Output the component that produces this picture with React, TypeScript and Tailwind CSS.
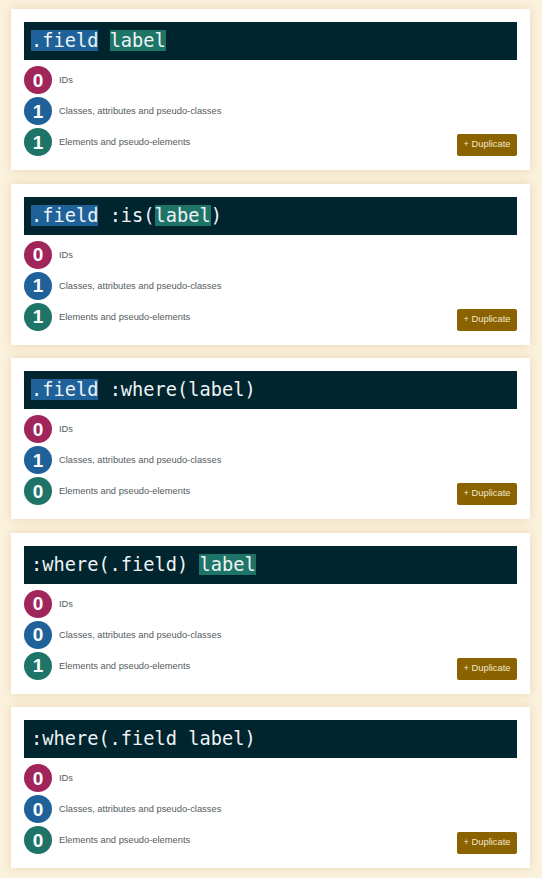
type Part = { text: string; kind?: "cls" | "el" };

interface SelectorCard {
  parts: Part[];
  ids: number;
  classes: number;
  elements: number;
}

const cards: SelectorCard[] = [
  {
    parts: [{ text: ".field", kind: "cls" }, { text: " " }, { text: "label", kind: "el" }],
    ids: 0,
    classes: 1,
    elements: 1,
  },
  {
    parts: [
      { text: ".field", kind: "cls" },
      { text: " :is(" },
      { text: "label", kind: "el" },
      { text: ")" },
    ],
    ids: 0,
    classes: 1,
    elements: 1,
  },
  {
    parts: [{ text: ".field", kind: "cls" }, { text: " :where(label)" }],
    ids: 0,
    classes: 1,
    elements: 0,
  },
  {
    parts: [{ text: ":where(.field) " }, { text: "label", kind: "el" }],
    ids: 0,
    classes: 0,
    elements: 1,
  },
  {
    parts: [{ text: ":where(.field label)" }],
    ids: 0,
    classes: 0,
    elements: 0,
  },
];

function Count({ value, color, label }: { value: number; color: string; label: string }) {
  return (
    <div className="flex items-center gap-[7px]">
      <div
        className={`flex size-[28px] items-center justify-center rounded-full text-[19px] font-bold leading-none text-white ${color}`}
      >
        {value}
      </div>
      <span className="pt-[2px] text-[9.33px] leading-none text-[#555b60]">{label}</span>
    </div>
  );
}

function Card({ card }: { card: SelectorCard }) {
  return (
    <div className="bg-white p-[13px] pb-[14px] shadow-[0_0_10px_rgba(190,150,70,0.3)]">
      <div className="flex h-[38px] items-center bg-[#00252f] px-[7px] font-['DejaVu_Sans_Mono',monospace] text-[18.67px] text-[#eef3f5]">
        <span className="whitespace-pre">
          {card.parts.map((p, i) => (
            <span
              key={i}
              className={
                p.kind === "cls"
                  ? "bg-[#1f6199]"
                  : p.kind === "el"
                    ? "bg-[#1f7468]"
                    : ""
              }
            >
              {p.text}
            </span>
          ))}
        </span>
      </div>
      <div className="mt-[6px] flex items-end justify-between">
        <div className="flex flex-col gap-[3px]">
          <Count value={card.ids} color="bg-[#a0255b]" label="IDs" />
          <Count
            value={card.classes}
            color="bg-[#1f6199]"
            label="Classes, attributes and pseudo-classes"
          />
          <Count
            value={card.elements}
            color="bg-[#1f7468]"
            label="Elements and pseudo-elements"
          />
        </div>
        <button className="h-[22px] w-[60px] rounded-[2px] bg-[#8a6200] text-[9.33px] text-[#f3e8cc]">
          + Duplicate
        </button>
      </div>
    </div>
  );
}

export default function App() {
  return (
    <div className="min-h-[878px] bg-[#fbf2de] pl-[11px] pr-[12px] pt-[9px] font-['Liberation_Sans',Arial,sans-serif]">
      <div className="flex flex-col gap-[13.5px]">
        {cards.map((c, i) => (
          <Card key={i} card={c} />
        ))}
      </div>
    </div>
  );
}
